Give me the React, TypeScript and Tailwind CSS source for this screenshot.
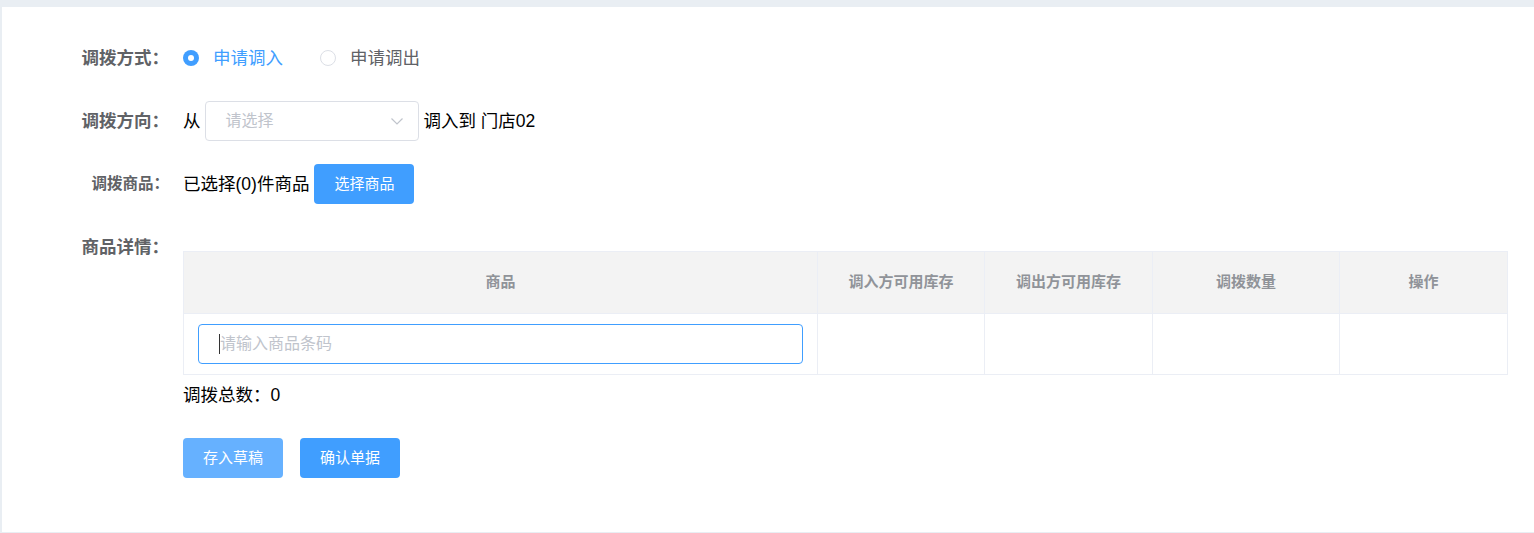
import React from "react";

const font = { fontFamily: '"Liberation Sans", "Noto Sans CJK SC", sans-serif' };

function Radio({ checked, label }: { checked: boolean; label: string }) {
  return (
    <label className="flex items-center mr-[37px]">
      {checked ? (
        <span className="w-[16px] h-[16px] rounded-full bg-[#409eff] flex items-center justify-center">
          <span className="w-[6px] h-[6px] rounded-full bg-white" />
        </span>
      ) : (
        <span className="w-[16px] h-[16px] rounded-full border border-[#dcdfe6] bg-white" />
      )}
      <span className={"ml-[14px] text-[17.5px] " + (checked ? "text-[#409eff]" : "text-[#606266]")}>{label}</span>
    </label>
  );
}

function Row({ label, small, children }: { label: string; small?: boolean; children?: React.ReactNode }) {
  return (
    <div className="flex items-start">
      <div
        className={
          "w-[167px] shrink-0 text-right font-bold text-[#606266] leading-[40px] whitespace-nowrap " +
          (small ? "text-[15.5px]" : "text-[17.5px]")
        }
      >
        {label}
      </div>
      <div className="ml-[14px] flex-1 min-w-0">{children}</div>
    </div>
  );
}

function App() {
  const cols = [
    { name: "商品", w: "w-[634px]" },
    { name: "调入方可用库存", w: "w-[167px]" },
    { name: "调出方可用库存", w: "w-[168px]" },
    { name: "调拨数量", w: "w-[187px]" },
    { name: "操作", w: "w-[168px]" },
  ];
  return (
    <div className="h-[533px] bg-[#e9eef3] pt-[7px] pl-[2px] pb-[1px] overflow-hidden" style={font}>
      <div className="h-full bg-white pt-[31px]">
        <Row label="调拨方式：">
          <div className="flex items-center h-[40px]">
            <Radio checked label="申请调入" />
            <Radio checked={false} label="申请调出" />
          </div>
        </Row>
        <div className="mt-[23px]">
          <Row label="调拨方向：">
            <div className="flex items-center h-[40px] text-[17.5px] text-black">
              <span>从</span>
              <div className="ml-[4px] w-[214px] h-[40px] border border-[#dcdfe6] rounded-[4px] flex items-center justify-between pl-[20px] pr-[14px]">
                <span className="text-[#c0c4cc] text-[16px]">请选择</span>
                <svg width="14" height="14" viewBox="0 0 14 14" fill="none">
                  <path d="M1.5 4.5 L7 10 L12.5 4.5" stroke="#c0c4cc" strokeWidth="1.2" />
                </svg>
              </div>
              <span className="ml-[5px]">调入到 门店02</span>
            </div>
          </Row>
        </div>
        <div className="mt-[23px]">
          <Row label="调拨商品：" small>
            <div className="flex items-center h-[40px] text-[17.5px] text-black">
              <span>已选择(0)件商品</span>
              <button className="ml-[5px] w-[100px] h-[40px] rounded-[4px] bg-[#409eff] text-white text-[15px]">
                选择商品
              </button>
            </div>
          </Row>
        </div>
        <div className="mt-[23px]">
          <Row label="商品详情：">
            <div className="pt-[24px] w-[1325px]">
              <table className="table-fixed border-collapse w-[1325px]">
                <thead>
                  <tr className="bg-[#f3f3f3] h-[62px]">
                    {cols.map((c) => (
                      <th
                        key={c.name}
                        className={c.w + " border border-[#ebeef5] text-[15px] font-bold text-[#909399] text-center"}
                      >
                        {c.name}
                      </th>
                    ))}
                  </tr>
                </thead>
                <tbody>
                  <tr className="h-[61px]">
                    <td className="border border-[#ebeef5] px-[14px]">
                      <div className="h-[40px] border border-[#409eff] rounded-[4px] flex items-center pl-[20px]">
                        <span className="w-[1px] h-[20px] bg-[#333]" />
                        <span className="text-[16px] text-[#c0c4cc]">请输入商品条码</span>
                      </div>
                    </td>
                    <td className="border border-[#ebeef5]" />
                    <td className="border border-[#ebeef5]" />
                    <td className="border border-[#ebeef5]" />
                    <td className="border border-[#ebeef5]" />
                  </tr>
                </tbody>
              </table>
              <div className="h-[40px] leading-[40px] text-[17.5px] text-black">调拨总数：0</div>
              <div className="mt-[23px] flex gap-[17px]">
                <button className="w-[100px] h-[40px] rounded-[4px] bg-[#66b1ff] text-white text-[15px]">存入草稿</button>
                <button className="w-[100px] h-[40px] rounded-[4px] bg-[#409eff] text-white text-[15px]">确认单据</button>
              </div>
            </div>
          </Row>
        </div>
      </div>
    </div>
  );
}

export default App;
